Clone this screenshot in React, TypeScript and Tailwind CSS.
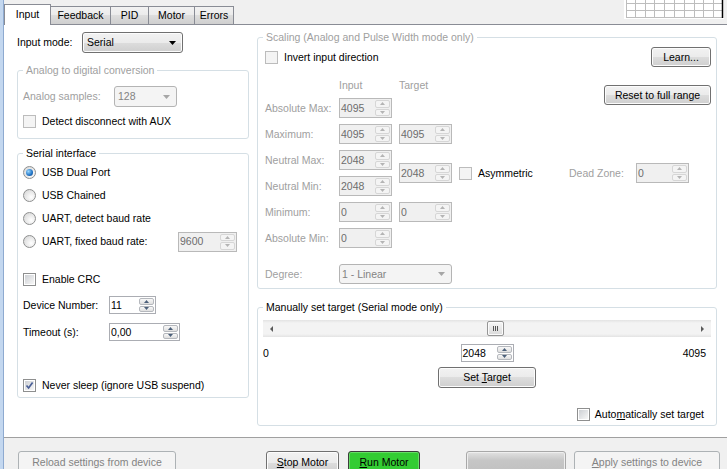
import clsx from 'clsx';
import type { ReactNode } from 'react';

const winBtn =
  'border-[#707070] bg-[linear-gradient(#f2f2f2,#ebebeb_50%,#dddddd_50%,#cfcfcf)] shadow-[inset_0_0_0_1px_#fcfcfc] text-black';
const offBtn = 'border-[#adb2b5] bg-[#f4f4f4] text-[#838383]';

type Dir = 'up' | 'down' | 'left' | 'right';

function Arrow({ dir, className }: { dir: Dir; className: string }) {
  const vertical = dir === 'up' || dir === 'down';
  const d = {
    up: 'M0 3 L2.5 0 L5 3 Z',
    down: 'M0 0 L5 0 L2.5 3 Z',
    left: 'M3 0 L3 6 L0 3 Z',
    right: 'M0 0 L3 3 L0 6 Z',
  }[dir];
  return (
    <svg width={vertical ? 5 : 3} height={vertical ? 3 : 6} className={className}>
      <path d={d} />
    </svg>
  );
}

function SpinBox({ value, className, disabled }: { value: string; className: string; disabled?: boolean }) {
  return (
    <div
      className={clsx(
        'flex border shrink-0',
        disabled ? 'border-[#b9b9b9] bg-[#f0f0f0] text-[#6d6d6d]' : 'border-[#abadb3] bg-white text-black',
        className
      )}
    >
      <div className="flex-1 flex items-center pl-[1px]">{value}</div>
      <div className="w-[16px] flex flex-col gap-px py-px pr-px">
        {(['up', 'down'] as const).map((d) => (
          <div
            key={d}
            className={clsx(
              'flex-1 flex items-center justify-center rounded-[2px] border',
              disabled ? 'border-[#d6d6d6] bg-[#f4f4f4]' : 'border-[#b5b8bd] bg-[linear-gradient(#f8f8f8,#dfdfdf)]'
            )}
          >
            <Arrow dir={d} className={disabled ? 'fill-[#b4b4b4]' : 'fill-[#4c607a]'} />
          </div>
        ))}
      </div>
    </div>
  );
}

function Combo({ value, className, disabled }: { value: string; className: string; disabled?: boolean }) {
  return (
    <div
      className={clsx(
        'flex items-center rounded-[3px] border pr-[6px] shrink-0',
        disabled ? 'border-[#b4b4b4] bg-[#f4f4f4] text-[#838383]' : winBtn,
        className
      )}
    >
      <span className="flex-1">{value}</span>
      <svg width="7" height="4">
        <path d="M0 0 L7 0 L3.5 4 Z" className={disabled ? 'fill-[#a6a6a6]' : 'fill-black'} />
      </svg>
    </div>
  );
}

function Btn({ children, className, disabled }: { children: ReactNode; className: string; disabled?: boolean }) {
  return (
    <button
      type="button"
      className={clsx('flex items-center justify-center rounded-[3px] border shrink-0', disabled ? offBtn : winBtn, className)}
    >
      {children}
    </button>
  );
}

function Check({ checked, disabled }: { checked?: boolean; disabled?: boolean }) {
  return (
    <span
      className={clsx(
        'w-[13px] h-[13px] border shrink-0 p-[1px] flex',
        disabled ? 'border-[#bcbcbc] bg-[#f4f4f4]' : 'border-[#8e8f8f] bg-white'
      )}
    >
      <span
        className={clsx(
          'flex-1 flex items-center justify-center',
          disabled ? 'bg-[#f4f4f4]' : 'bg-[linear-gradient(135deg,#cdd0d4,#f7f7f7)]'
        )}
      >
        {checked && (
          <svg width="9" height="9" viewBox="0 0 9 9">
            <path d="M1.5 4.5 L3.6 7 L7.6 1.6" fill="none" stroke="#4a5f97" strokeWidth="1.7" />
          </svg>
        )}
      </span>
    </span>
  );
}

function Radio({ checked }: { checked?: boolean }) {
  return (
    <span className="w-[13px] h-[13px] rounded-full border border-[#8e8f8f] bg-[radial-gradient(circle_at_65%_65%,#ffffff,#d2d2d2)] flex items-center justify-center shrink-0">
      {checked && (
        <span className="w-[7px] h-[7px] rounded-full bg-[radial-gradient(circle_at_35%_35%,#9ad8ff,#1f72c4_60%,#0d3b79)]" />
      )}
    </span>
  );
}

function Group({ title, disabled, className, children }: { title: string; disabled?: boolean; className: string; children: ReactNode }) {
  return (
    <fieldset className={clsx('border border-[#d5dfe5] rounded-[3px] px-[5px] flex flex-col', className)}>
      <legend className={clsx('px-[3px]', disabled ? 'text-[#a0a0a0]' : 'text-black')}>{title}</legend>
      {children}
    </fieldset>
  );
}

export default function App() {
  return (
    <div className="w-[727px] h-[469px] flex overflow-hidden bg-[#f0f0f0] text-[10.5px] leading-[13px] text-black font-['Liberation_Sans',Arial,sans-serif]">
      <div className="w-[4px] bg-[#c3d7ef] border-r border-[#8eaad0]" />
      <div className="flex-1 flex flex-col min-w-0">
        {/* Tabs */}
        <div className="h-[24px] shrink-0 flex items-end">
          <div className="relative z-10 -mb-px h-[21px] w-[47px] bg-white border border-b-0 border-[#898c95] flex items-center justify-center pb-[2px]">
            Input
          </div>
          {[
            ['Feedback', 'w-[60px]'],
            ['PID', 'w-[38px]'],
            ['Motor', 'w-[46px]'],
            ['Errors', 'w-[39px]'],
          ].map(([t, w]) => (
            <div
              key={t}
              className={clsx(
                'h-[18px] border-t border-r border-[#898c95] bg-[linear-gradient(#f2f2f2,#ebebeb_50%,#dddddd_50%,#cfcfcf)] flex items-center justify-center',
                w
              )}
            >
              {t}
            </div>
          ))}
          <svg width="100" height="19" className="ml-auto mr-[3px] self-start">
            <rect width="100" height="19" fill="#fff" />
            {[2, 11, 21, 30, 40, 50, 60, 70, 79, 89].map((x) => (
              <line key={x} x1={x + 0.5} y1="0" x2={x + 0.5} y2="17" stroke="#bdbdbd" />
            ))}
            {[3, 10, 17].map((y) => (
              <line key={y} x1="2" y1={y + 0.5} x2="99" y2={y + 0.5} stroke="#bdbdbd" />
            ))}
            <line x1="98.5" y1="0" x2="98.5" y2="18" stroke="#000" strokeWidth="1.5" />
          </svg>
        </div>

        {/* Tab page */}
        <div className="h-[413px] shrink-0 border-t border-[#898c95] bg-white flex pl-[13px] gap-[8px]">
          {/* Left column */}
          <div className="w-[232px] flex flex-col">
            <div className="mt-[7px] h-[21px] flex items-center">
              <span className="w-[65px]">Input mode:</span>
              <Combo value="Serial" className="w-[101px] h-[21px] pl-[4px]" />
            </div>

            <Group title="Analog to digital conversion" disabled className="mt-[11px] pb-[10px]">
              <div className="mt-[9px] h-[21px] flex items-center text-[#a0a0a0]">
                <span className="w-[91px]">Analog samples:</span>
                <Combo value="128" disabled className="w-[63px] h-[21px] pl-[3px]" />
              </div>
              <div className="mt-[8px] h-[13px] flex items-center gap-[6px]">
                <Check disabled />
                <span>Detect disconnect with AUX</span>
              </div>
            </Group>

            <Group title="Serial interface" className="mt-[8px] pb-[5px]">
              <div className="mt-[2px] flex flex-col gap-[2px]">
                {['USB Dual Port', 'USB Chained', 'UART, detect baud rate'].map((t, i) => (
                  <div key={t} className="h-[21px] flex items-center gap-[6px]">
                    <Radio checked={i === 0} />
                    <span>{t}</span>
                  </div>
                ))}
                <div className="h-[21px] flex items-center gap-[6px]">
                  <Radio />
                  <span className="w-[130px]">UART, fixed baud rate:</span>
                  <SpinBox value="9600" disabled className="w-[59px] h-[20px]" />
                </div>
              </div>
              <div className="mt-[21px] h-[13px] flex items-center gap-[6px]">
                <Check />
                <span>Enable CRC</span>
              </div>
              <div className="mt-[10px] h-[18px] flex items-center">
                <span className="w-[86px]">Device Number:</span>
                <SpinBox value="11" className="w-[47px] h-[18px]" />
              </div>
              <div className="mt-[9px] h-[18px] flex items-center">
                <span className="w-[86px]">Timeout (s):</span>
                <SpinBox value="0,00" className="w-[71px] h-[18px]" />
              </div>
              <div className="mt-[38px] h-[13px] flex items-center gap-[6px]">
                <Check checked />
                <span>Never sleep (ignore USB suspend)</span>
              </div>
            </Group>
          </div>

          {/* Right column */}
          <div className="w-[460px] flex flex-col">
            <Group title="Scaling (Analog and Pulse Width mode only)" disabled className="mt-[6px] pb-[4px]">
              <div className="pl-[2px] flex flex-col">
                <div className="mt-[3px] h-[20px] flex items-center gap-[6px]">
                  <Check disabled />
                  <span>Invert input direction</span>
                  <Btn className="ml-auto w-[60px] h-[20px]">Learn...</Btn>
                </div>

                <div className="mt-[11px] grid grid-cols-[67px_53px_53px_103px_60px_53px_1fr] grid-rows-[14px_20px_20px_20px_20px_20px_20px] gap-x-[7px] gap-y-[6px] text-[#a0a0a0]">
                  <span className="col-start-2 row-start-1 self-center">Input</span>
                  <span className="col-start-3 row-start-1 self-center">Target</span>
                  <Btn className="col-start-5 col-span-3 row-start-1 row-span-2 justify-self-end self-start mt-[7px] w-[107px] h-[20px]">
                    Reset to full range
                  </Btn>

                  <span className="col-start-1 row-start-2 self-center whitespace-nowrap">Absolute Max:</span>
                  <SpinBox value="4095" disabled className="col-start-2 row-start-2 h-[20px]" />

                  <span className="col-start-1 row-start-3 self-center">Maximum:</span>
                  <SpinBox value="4095" disabled className="col-start-2 row-start-3 h-[20px]" />
                  <SpinBox value="4095" disabled className="col-start-3 row-start-3 h-[20px]" />

                  <span className="col-start-1 row-start-4 self-center whitespace-nowrap">Neutral Max:</span>
                  <SpinBox value="2048" disabled className="col-start-2 row-start-4 h-[20px]" />
                  <span className="col-start-1 row-start-5 self-center whitespace-nowrap">Neutral Min:</span>
                  <SpinBox value="2048" disabled className="col-start-2 row-start-5 h-[20px]" />
                  <SpinBox value="2048" disabled className="col-start-3 row-start-4 row-span-2 self-center h-[20px]" />
                  <div className="col-start-4 row-start-4 row-span-2 self-center flex items-center gap-[6px] text-black">
                    <Check disabled />
                    <span>Asymmetric</span>
                  </div>
                  <span className="col-start-5 row-start-4 row-span-2 self-center">Dead Zone:</span>
                  <SpinBox value="0" disabled className="col-start-6 row-start-4 row-span-2 self-center h-[20px]" />

                  <span className="col-start-1 row-start-6 self-center">Minimum:</span>
                  <SpinBox value="0" disabled className="col-start-2 row-start-6 h-[20px]" />
                  <SpinBox value="0" disabled className="col-start-3 row-start-6 h-[20px]" />

                  <span className="col-start-1 row-start-7 self-center whitespace-nowrap">Absolute Min:</span>
                  <SpinBox value="0" disabled className="col-start-2 row-start-7 h-[20px]" />
                </div>

                <div className="mt-[16px] h-[20px] flex items-center text-[#a0a0a0]">
                  <span className="w-[74px]">Degree:</span>
                  <Combo value="1 - Linear" disabled className="w-[113px] h-[20px] pl-[2px]" />
                </div>
              </div>
            </Group>

            <Group title="Manually set target (Serial mode only)" className="mt-[12px] pb-[4px]">
              <div className="mt-[6px] h-[17px] flex items-center bg-[linear-gradient(#e3e3e3,#f3f3f3_18%,#f3f3f3_82%,#e3e3e3)]">
                <div className="w-[17px] flex justify-center">
                  <Arrow dir="left" className="fill-[#5a5a5a]" />
                </div>
                <div className="flex-1 h-full flex items-center">
                  <div className="ml-[207px] w-[17px] h-[15px] rounded-[2px] border border-[#969696] bg-[linear-gradient(#f6f6f6,#dadada)] shadow-[inset_0_0_0_1px_#fbfbfb] flex items-center justify-center gap-[1px]">
                    <span className="w-px h-[5px] bg-[#555]" />
                    <span className="w-px h-[5px] bg-[#555]" />
                    <span className="w-px h-[5px] bg-[#555]" />
                  </div>
                </div>
                <div className="w-[17px] flex justify-center">
                  <Arrow dir="right" className="fill-[#5a5a5a]" />
                </div>
              </div>
              <div className="mt-[7px] h-[18px] grid grid-cols-[1fr_auto_1fr] items-center">
                <span>0</span>
                <SpinBox value="2048" className="w-[53px] h-[18px]" />
                <span className="justify-self-end pr-[5px]">4095</span>
              </div>
              <Btn className="mt-[5px] self-center w-[98px] h-[21px]">
                <span>
                  Set <u>T</u>arget
                </span>
              </Btn>
              <div className="mt-[20px] h-[13px] flex items-center justify-end gap-[5px] pr-[7px]">
                <Check />
                <span>
                  Auto<u>m</u>atically set target
                </span>
              </div>
            </Group>
          </div>
        </div>

        {/* Bottom bar */}
        <div className="h-[32px] shrink-0 overflow-hidden border-t border-[#a0a0a0] bg-[#f0f0f0] flex items-start pt-[13px] pl-[14px]">
          <Btn disabled className="w-[158px] h-[23px]">
            Reload settings from device
          </Btn>
          <Btn className="ml-[90px] w-[73px] h-[23px]">
            <span>
              <u>S</u>top Motor
            </span>
          </Btn>
          <button
            type="button"
            className="ml-[9px] w-[72px] h-[23px] rounded-[3px] border border-[#3c3c3c] bg-[#33cc33] shadow-[inset_0_0_0_1px_#66dd66] flex items-center justify-center shrink-0"
          >
            <span>
              <u>R</u>un Motor
            </span>
          </button>
          <div className="ml-[46px] w-[100px] h-[23px] rounded-[3px] border border-[#a8a8a8] bg-[linear-gradient(#e2e2e2,#c6c6c6_40%,#c0c0c0)] shadow-[inset_0_0_0_1px_#eeeeee] shrink-0" />
          <Btn disabled className="ml-[8px] w-[146px] h-[23px]">
            <span>
              <u>A</u>pply settings to device
            </span>
          </Btn>
        </div>
      </div>
    </div>
  );
}
